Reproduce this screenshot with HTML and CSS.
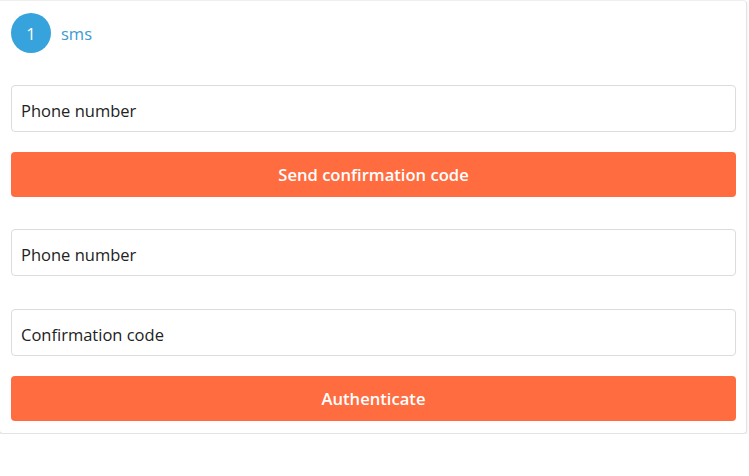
FILE: index.html
```html
<!DOCTYPE html>
<html>
<head>
<meta charset="utf-8">
<link rel="stylesheet" href="styles.css">
</head>
<body>
<div class="card">
  <div class="step">
    <span class="badge">1</span>
    <span class="step-label">sms</span>
  </div>
  <form class="group first">
    <input class="field" type="text" placeholder="Phone number">
    <button class="btn" type="button">Send confirmation code</button>
  </form>
  <form class="group second">
    <input class="field" type="text" placeholder="Phone number">
    <input class="field" type="text" placeholder="Confirmation code">
    <button class="btn" type="button">Authenticate</button>
  </form>
</div>
</body>
</html>
```

FILE: styles.css
```css
html, body {
  margin: 0;
  padding: 0;
  background: #fff;
}
body {
  font-family: "Open Sans", "Noto Sans", sans-serif;
}
.card {
  box-sizing: border-box;
  width: 748px;
  margin-left: -1px;
  height: 434px;
  border: 1px solid #e3e3e3;
  border-top-color: #efefef;
  border-radius: 0 4px 4px 4px;
  box-shadow: 0 1px 2px rgba(0,0,0,0.12);
  padding: 12px 10px 0 11px;
}
.step {
  display: flex;
  align-items: center;
  gap: 10px;
  height: 40px;
}
.badge {
  width: 40px;
  height: 40px;
  border-radius: 50%;
  background: #36a3dc;
  color: #fff;
  display: flex;
  align-items: center;
  justify-content: center;
  font-size: 16.5px;
}
.step-label {
  color: #3a9ad3;
  font-size: 16.5px;
}
.group {
  display: flex;
  flex-direction: column;
  margin: 0;
}
.group.first {
  margin-top: 32px;
  gap: 20px;
}
.group.second {
  margin-top: 32px;
}
.group.second .field + .field {
  margin-top: 33px;
}
.group.second .btn {
  margin-top: 20px;
}
.field {
  box-sizing: border-box;
  height: 47px;
  width: 100%;
  border: 1px solid #dcdcdc;
  border-radius: 4px;
  padding: 3px 9px 0;
  font-family: inherit;
  font-size: 16.5px;
  color: #222;
  outline: none;
}
.field::placeholder {
  color: #222;
  opacity: 1;
}
.btn {
  height: 45px;
  width: 100%;
  border: none;
  border-radius: 4px;
  background: #ff6c40;
  color: #fff;
  font-family: inherit;
  font-weight: 600;
  font-size: 16.6px;
  cursor: pointer;
}
```
